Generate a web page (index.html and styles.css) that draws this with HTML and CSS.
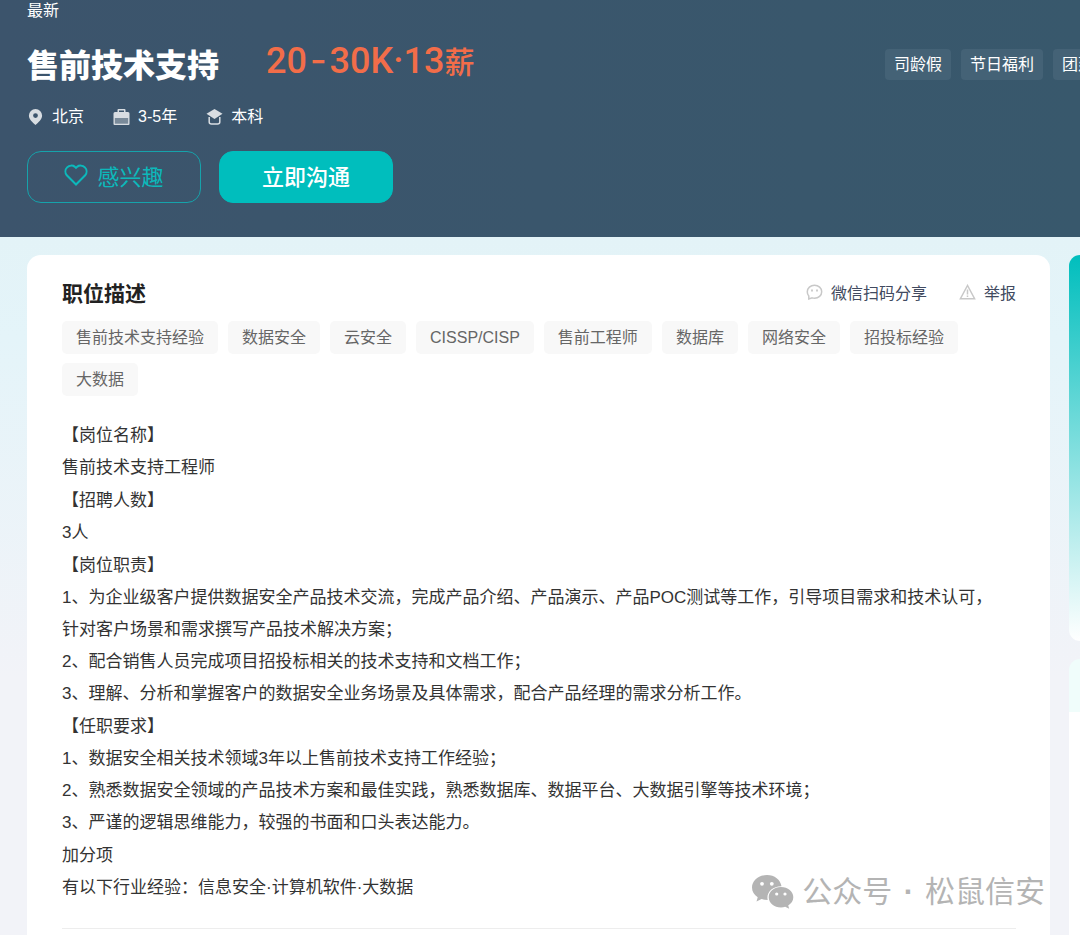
FILE: index.html
```html
<!DOCTYPE html>
<html lang="zh-CN">
<head>
  <meta charset="UTF-8">
  <meta name="viewport" content="width=device-width, initial-scale=1">
  <title>售前技术支持</title>
  <link rel="stylesheet" href="styles.css">
</head>
<body>
  <header class="banner">
    <div class="job-info">
      <div class="job-status">最新</div>
      <div class="job-name">
        <h1>售前技术支持</h1>
        <span class="salary">20<span class="dash">-</span>30K·13<span class="unit">薪</span></span>
      </div>
      <ul class="job-meta">
        <li>
          <svg class="meta-icon" viewBox="0 0 16 16"><path fill-rule="evenodd" d="M8 0a6.600 6.600 0 0 0-6.600 6.600C1.400 10.500 5 13.500 8 16c3-2.500 6.600-5.500 6.600-9.400A6.600 6.600 0 0 0 8 0zm0 4.200a2.400 2.400 0 1 1 0 4.800 2.400 2.400 0 0 1 0-4.800z"/></svg>
          北京
        </li>
        <li>
          <svg class="meta-icon" viewBox="0 0 16 16"><path fill-rule="evenodd" d="M4 3V1Q4 0 5 0h6q1 0 1 1v2h2.500Q16 3 16 4.500V15q0 1-1 1H1q-1 0-1-1V4.500Q0 3 1.500 3zm1.500 0h5V1.400h-5zM1.400 9v5.400h13.200V9z"/><path opacity=".4" d="M1.400 9h13.200v5.400H1.400z"/></svg>
          3-5年
        </li>
        <li>
          <svg class="meta-icon" viewBox="0 0 16 16"><path d="M8 0 0 4.800l8 5.200 8-5.200z"/><path class="cap" d="M2.700 8v5q0 2 2.300 2h6q2.300 0 2.300-2V8"/></svg>
          本科
        </li>
      </ul>
      <div class="job-actions">
        <button type="button" class="btn btn-like">
          <svg class="heart" viewBox="0 0 24 22"><path d="M12 20.500 2.800 11.300A5.900 5.900 0 0 1 11 2.900l1 1 1-1a5.900 5.900 0 0 1 8.200 8.400z"/></svg>
          感兴趣
        </button>
        <button type="button" class="btn btn-chat">立即沟通</button>
      </div>
    </div>
    <ul class="welfare">
      <li>司龄假</li>
      <li>节日福利</li>
      <li>团建聚餐</li>
    </ul>
  </header>

  <div class="content">
    <main class="detail">
      <div class="detail-head">
        <h2>职位描述</h2>
        <div class="detail-links">
          <a href="#share">
            <svg class="link-icon" viewBox="0 0 16 16"><path d="M2.300 15v-3A6.200 6.200 0 0 1 .8 7.800C.8 4 4 1.300 8 1.300s7.200 2.700 7.200 6.500-3.200 6.400-7.200 6.400q-1.200 0-2.300-.3z"/><path class="dots" d="M5.500 5.500v2M10.500 5.500v2"/></svg>
            微信扫码分享
          </a>
          <a href="#report">
            <svg class="link-icon" viewBox="0 0 16 16"><path d="M8 1.500.9 14.700h14.200z"/><path d="M8 5.500v5M8 11.500v1.500"/></svg>
            举报
          </a>
        </div>
      </div>

      <ul class="keywords">
        <li>售前技术支持经验</li>
        <li>数据安全</li>
        <li>云安全</li>
        <li>CISSP/CISP</li>
        <li>售前工程师</li>
        <li>数据库</li>
        <li>网络安全</li>
        <li>招投标经验</li>
        <li>大数据</li>
      </ul>

      <div class="description">
        <section>
          <p>【岗位名称】</p>
          <p>售前技术支持工程师</p>
        </section>
        <section>
          <p>【招聘人数】</p>
          <p>3人</p>
        </section>
        <section>
          <p>【岗位职责】</p>
          <p>1、为企业级客户提供数据安全产品技术交流，完成产品介绍、产品演示、产品POC测试等工作，引导项目需求和技术认可，<br>针对客户场景和需求撰写产品技术解决方案；</p>
          <p>2、配合销售人员完成项目招投标相关的技术支持和文档工作；</p>
          <p>3、理解、分析和掌握客户的数据安全业务场景及具体需求，配合产品经理的需求分析工作。</p>
        </section>
        <section>
          <p>【任职要求】</p>
          <p>1、数据安全相关技术领域3年以上售前技术支持工作经验；</p>
          <p>2、熟悉数据安全领域的产品技术方案和最佳实践，熟悉数据库、数据平台、大数据引擎等技术环境；</p>
          <p>3、严谨的逻辑思维能力，较强的书面和口头表达能力。</p>
        </section>
        <section>
          <p>加分项</p>
          <p>有以下行业经验：信息安全·计算机软件·大数据</p>
        </section>
      </div>
    </main>

    <aside class="sidebar">
      <div class="side-card side-login"></div>
      <div class="side-card side-company"></div>
    </aside>
  </div>

  <div class="watermark">
    <svg class="wechat" viewBox="0 0 42 34"><path d="M15 0C6.700 0 0 5.600 0 12.500c0 4 2.200 7.400 5.700 9.700L4.500 26.500l5-2.500q2.700.9 6.200 1C14 17.500 20.500 11 29.500 11.200 28.500 4.800 22.500 0 15 0z"/><path d="M29 12c-6.900 0-12.300 4.500-12.300 10.200S22.100 32.400 29 32.400q2.200 0 4.200-.6l4 2-1-3.400c3.200-1.900 5.100-4.800 5.100-8.200C41.300 16.500 35.900 12 29 12z"/><g class="eyes"><circle cx="10" cy="8.800" r="1.900"/><circle cx="19.800" cy="8.800" r="1.900"/><circle cx="24.700" cy="19" r="1.600"/><circle cx="33" cy="19" r="1.600"/></g></svg>
    <span>公众号 <b>·</b> 松鼠信安</span>
  </div>
</body>
</html>
```

FILE: styles.css
```css
* {
  box-sizing: border-box;
}
body, h1, h2, p, ul {
  margin: 0;
  padding: 0;
}
ul {
  list-style: none;
}
body {
  position: relative;
  font-family: "Liberation Sans", "Noto Sans CJK SC", sans-serif;
  font-size: 16px;
  color: #333;
  background: #f2f3f8;
  overflow-x: hidden;
}

/* 顶部职位信息 */
.banner {
  display: flex;
  justify-content: space-between;
  padding: 0 0 34px 27px;
  color: #fff;
  background: linear-gradient(90deg, #3c546c, #38586c);
}
.job-status {
  line-height: 22px;
}
.job-name {
  display: flex;
  align-items: flex-end;
  gap: 47px;
  height: 85px;
  padding-bottom: 17px;
}
.job-name h1 {
  font-size: 32px;
  font-weight: 900;
  line-height: 48px;
}
.salary {
  display: flex;
  align-items: baseline;
  padding-bottom: 3px;
  font-family: Roboto, "Noto Sans CJK SC", sans-serif;
  font-size: 36px;
  font-weight: 500;
  line-height: 48px;
  color: #f26d49;
}
.salary .dash {
  padding: 0 3px;
  font-family: Inter, sans-serif;
}
.salary .unit {
  font-size: 30px;
}
.job-meta {
  display: flex;
  gap: 29px;
  line-height: 20px;
}
.job-meta li {
  display: flex;
  align-items: center;
  gap: 8px;
}
.meta-icon {
  width: 17px;
  height: 16px;
  fill: #d8dde2;
}
.meta-icon .cap {
  fill: none;
  stroke: #d8dde2;
  stroke-width: 1.5;
}
.job-actions {
  display: flex;
  gap: 18px;
  margin-top: 24px;
}
.btn {
  display: flex;
  align-items: center;
  justify-content: center;
  gap: 9px;
  width: 174px;
  height: 52px;
  padding: 0 0 4px;
  border: 1px solid #00bebd;
  border-radius: 14px;
  font-family: inherit;
  font-size: 22px;
  cursor: pointer;
}
.btn-like {
  color: #0cb9bb;
  border-color: #16a3ab;
  background: transparent;
}
.btn-chat {
  color: #fff;
  font-weight: 500;
  background: #00bebd;
}
.heart {
  width: 24px;
  height: 22px;
  fill: none;
  stroke: #0cb9bb;
  stroke-width: 2;
}
.welfare {
  display: flex;
  flex: 0 0 195px;
  gap: 10px;
  padding-top: 49px;
  overflow: hidden;
}
.welfare li {
  flex: none;
  height: 31px;
  padding: 0 9px;
  line-height: 31px;
  border-radius: 4px;
  background: #446276;
}

/* 职位描述 */
.content {
  display: grid;
  grid-template-columns: 1fr 11px;
  gap: 19px;
  min-height: 698px;
  padding: 18px 0 0 27px;
  background: linear-gradient(#e3f3f7, #e4f4f9 100px, #f2f3f8 440px);
}
.detail {
  padding: 19px 34px 0 35px;
  border-radius: 14px 14px 0 0;
  background: #fff;
}
.detail-head {
  display: flex;
  align-items: center;
  justify-content: space-between;
  height: 36px;
}
.detail-head h2 {
  font-size: 21px;
  color: #222;
}
.detail-links {
  display: flex;
  gap: 32px;
}
.detail-links a {
  display: flex;
  align-items: center;
  gap: 8px;
  color: #414a60;
  text-decoration: none;
}
.link-icon {
  width: 17px;
  height: 16px;
  fill: none;
  stroke: #c8c8c8;
  stroke-width: 1.5;
}
.link-icon .dots {
  stroke-width: 1.8;
}
.keywords {
  display: flex;
  flex-wrap: wrap;
  gap: 9px 10px;
  margin-top: 11px;
}
.keywords li {
  height: 33px;
  padding: 0 14px;
  line-height: 33px;
  border-radius: 5px;
  color: #666;
  background: #f8f8f8;
}
.description {
  display: grid;
  gap: 1px;
  margin-top: 24px;
  padding-bottom: 24px;
  border-bottom: 1px solid #ededed;
  font-size: 17px;
  line-height: 32px;
}

/* 右侧栏 */
.sidebar {
  display: flex;
  flex-direction: column;
  gap: 18px;
  overflow: hidden;
}
.side-card {
  border-radius: 14px 0 0 14px;
}
.side-login {
  height: 386px;
  background: linear-gradient(#00bebd, #fff);
}
.side-company {
  flex: 1;
  border-bottom-left-radius: 0;
  background: linear-gradient(#f0fdfb 53px, #fff 53px);
}

/* 右下角水印 */
.watermark {
  position: absolute;
  right: 35px;
  bottom: 21px;
  display: flex;
  align-items: center;
  gap: 8px;
  font-size: 30px;
  line-height: 44px;
  color: #b4b4b4;
}
.watermark b {
  padding: 0 3px;
}
.wechat {
  width: 42px;
  height: 34px;
  fill: #b4b4b4;
}
.wechat .eyes {
  fill: #fff;
}
```
